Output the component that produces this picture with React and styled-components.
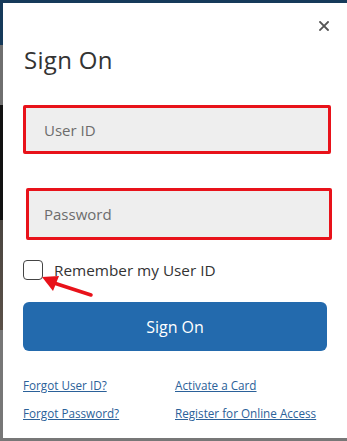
import * as React from 'react';
import styled, { createGlobalStyle } from 'styled-components';

const GlobalStyle = createGlobalStyle`
  html, body {
    margin: 0;
    padding: 0;
    background: #1b3a55;
  }
  body {
    font-family: 'Open Sans', 'Liberation Sans', sans-serif;
  }
`;

const Page = styled.div`
  width: 347px;
  height: 441px;
  overflow: hidden;
  padding: 3px 0 0 3px;
  box-sizing: border-box;
  background:
    linear-gradient(180deg, #163a5a 0px, #163a5a 45px, #6f6f6f 45px, #6f6f6f 105px, #111 105px, #111 220px, #4a4540 220px, #5a5048 330px, #777 330px);
`;

const Modal = styled.div`
  position: relative;
  width: 344px;
  height: 435px;
  background: #fff;
  padding: 0 20px;
  box-sizing: border-box;
  display: flex;
  flex-direction: column;
`;

const Header = styled.div`
  display: flex;
  justify-content: flex-end;
  padding-top: 16px;
  height: 23px;
  margin-right: -4px;
`;

const CloseButton = styled.button`
  border: none;
  background: none;
  padding: 0;
  width: 14px;
  height: 14px;
  display: flex;
  align-items: center;
  justify-content: center;
  cursor: pointer;
`;

const Title = styled.h1`
  margin: 0;
  margin-top: 3px;
  margin-left: 1px;
  font-size: 24px;
  line-height: 30px;
  font-weight: 400;
  color: #333;
  letter-spacing: 0.3px;
`;

const Field = styled.div`
  margin-top: ${(p) => p.top}px;
  margin-left: ${(p) => p.shift || 0}px;
  width: ${(p) => p.width}px;
  height: ${(p) => p.height}px;
  box-sizing: border-box;
  border: 3px solid #e8121a;
  border-radius: 2px;
  background: #eeeeee;
  display: flex;
  align-items: center;
`;

const Input = styled.input`
  border: none;
  background: transparent;
  outline: none;
  width: 100%;
  padding: 0 0 0 ${(p) => p.indent}px;
  font-family: inherit;
  font-size: 15px;
  color: #333;
  &::placeholder {
    color: #6c6c6c;
  }
`;

const CheckRow = styled.label`
  margin-top: 20px;
  display: flex;
  align-items: center;
  gap: 11px;
  height: 20px;
  font-size: 15.3px;
  color: #333;
`;

const Box = styled.span`
  width: 20px;
  height: 20px;
  border: 1.5px solid #444;
  border-radius: 4px;
  box-sizing: border-box;
  display: inline-block;
`;

const SubmitButton = styled.button`
  margin-top: 22px;
  width: 304px;
  height: 49px;
  border: none;
  border-radius: 6px;
  background: #236aad;
  color: #fff;
  font-family: inherit;
  font-size: 16px;
  cursor: pointer;
`;

const Links = styled.div`
  margin-top: 25px;
  display: grid;
  grid-template-columns: 152px 1fr;
  row-gap: 10px;
`;

const LinkItem = styled.a`
  font-size: 11.7px;
  line-height: 18px;
  color: #2b6199;
  text-decoration: underline;
  cursor: pointer;
`;

const Arrow = styled.svg`
  position: absolute;
  left: 35px;
  top: 270px;
  pointer-events: none;
`;

export default function App() {
  return (
    <Page>
      <GlobalStyle />
      <Modal>
        <Header>
          <CloseButton aria-label="Close">
            <svg width="10" height="10" viewBox="0 0 10 10">
              <path d="M1 1L9 9M9 1L1 9" stroke="#555" strokeWidth="1.8" strokeLinecap="square" />
            </svg>
          </CloseButton>
        </Header>
        <Title>Sign On</Title>
        <Field top={30} width={308} height={49}>
          <Input indent={18} placeholder="User ID" />
        </Field>
        <Field top={34} shift={3} width={306} height={52}>
          <Input indent={15} placeholder="Password" type="password" />
        </Field>
        <CheckRow>
          <Box />
          Remember my User ID
        </CheckRow>
        <SubmitButton>Sign On</SubmitButton>
        <Links>
          <LinkItem>Forgot User ID?</LinkItem>
          <LinkItem>Activate a Card</LinkItem>
          <LinkItem>Forgot Password?</LinkItem>
          <LinkItem>Register for Online Access</LinkItem>
        </Links>
        <Arrow width="60" height="30" viewBox="0 0 60 30">
          <path d="M53 22L16 10" stroke="#e8121a" strokeWidth="3.5" strokeLinecap="round" />
          <path d="M4 4L21 3L15 18Z" fill="#e8121a" />
        </Arrow>
      </Modal>
    </Page>
  );
}
